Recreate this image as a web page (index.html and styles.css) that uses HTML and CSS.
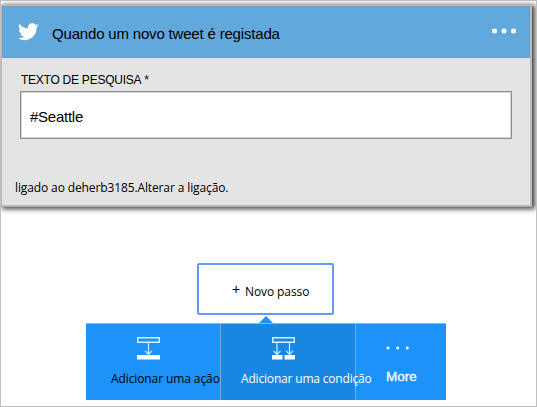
FILE: index.html
```html
<!DOCTYPE html>
<html lang="pt">
<head>
<meta charset="utf-8">
<title>Quando um novo tweet é registada</title>
<link rel="stylesheet" href="styles.css">
</head>
<body>
<main class="canvas">
  <section class="card">
    <header class="card-header">
      <svg class="bird" viewBox="0 0 24 24" fill="#fff"><path d="M23.6 4.9a9.7 9.7 0 0 1-2.8.8 4.9 4.9 0 0 0 2.1-2.7 9.7 9.7 0 0 1-3.1 1.2 4.8 4.8 0 0 0-8.3 4.4A13.8 13.8 0 0 1 1.6 3.5a4.9 4.9 0 0 0 1.5 6.5 4.8 4.8 0 0 1-2.2-.6 4.9 4.9 0 0 0 3.9 4.8 4.9 4.9 0 0 1-2.2.1 4.9 4.9 0 0 0 4.6 3.4A9.8 9.8 0 0 1 0 19.7a13.8 13.8 0 0 0 21.2-12.3 9.9 9.9 0 0 0 2.4-2.5z"/></svg>
      <h1 class="title">Quando um novo tweet é registada</h1>
      <svg class="dots" viewBox="0 0 24 6" fill="#fff"><circle cx="2.5" cy="3" r="2.5"/><circle cx="12" cy="3" r="2.5"/><circle cx="21.5" cy="3" r="2.5"/></svg>
    </header>
    <div class="card-body">
      <label class="label" for="search"><span class="label-text">TEXTO DE PESQUISA</span><span class="required">*</span></label>
      <div class="field" id="search">#Seattle</div>
      <p class="connection"><span>ligado ao deherb3185.</span><span>Alterar a ligação.</span></p>
    </div>
  </section>
  <div class="new-step"><span class="plus">+</span><span class="step-text">Novo passo</span></div>
  <svg class="pointer" viewBox="0 0 14 7"><path d="M0 7L7 0L14 7z" fill="#1b93f8"/></svg>
  <nav class="actions">
    <div class="action action-add">
      <svg class="icon" viewBox="0 0 23 23" fill="none" stroke="#d9efff"><path d="M.75.75h21.5v4.5H.75z" stroke-width="1.4"/><path d="M11.5 6v11M8 13.8l3.5 3.5 3.5-3.5" stroke-width="1.2"/><path d="M0 18h23v4.5H0z" fill="#fff" stroke="none"/></svg>
      <span class="action-text">Adicionar uma ação</span>
    </div>
    <div class="action action-condition">
      <svg class="icon" viewBox="0 0 23 23" fill="none" stroke="#d9efff"><path d="M.75.75h21.5v4.5H.75z" stroke-width="1.4"/><path d="M5 6v11M1.5 13.8L5 17.3l3.5-3.5M17.5 6v11M14 13.8l3.5 3.5 3.5-3.5" stroke-width="1.2"/><path d="M0 18h10.5v4.5H0zM12.5 18H23v4.5H12.5z" fill="#fff" stroke="none"/></svg>
      <span class="action-text">Adicionar uma condição</span>
    </div>
    <div class="action action-more">
      <svg class="more-dots" viewBox="0 0 24 4" fill="#fff"><circle cx="2" cy="2" r="1.5"/><circle cx="11.7" cy="2" r="1.5"/><circle cx="21.3" cy="2" r="1.5"/></svg>
      <span class="more-text">More</span>
    </div>
  </nav>
</main>
</body>
</html>
```

FILE: styles.css
```css
* { box-sizing: border-box; }
body { margin: 0; background: #fff; color: #000; font-family: "Liberation Sans", Arial, sans-serif; }
svg { display: block; flex: none; }
.canvas {
  width: 537px;
  height: 407px;
  border: 1px solid #bfbfbf;
  overflow: hidden;
  display: flex;
  flex-direction: column;
}
.card {
  flex: none;
  width: 531px;
  height: 202px;
  margin: 4px 0 0;
  border: 1px solid #bbb;
  border-right-width: 2px;
  border-bottom: 2px solid #b4b6b6;
  background: #e4e4e4;
  box-shadow: 2px 1px 5px 1px rgba(0, 0, 0, .75);
}
.card-header {
  height: 52px;
  border: 1px solid #6b9bbd;
  background: #61a8dd;
  display: flex;
  align-items: center;
  padding: 0 13px 0 15px;
}
.bird { width: 21px; height: 21px; margin-top: -1px; }
.title { margin: 4px 0 0 13px; font-size: 15px; line-height: 18px; font-weight: 400; letter-spacing: -.18px; white-space: nowrap; }
.dots { width: 24px; height: 6px; margin: -2px 0 0 auto; }
.card-body { padding: 15px 18px 0; }
.label { display: flex; height: 18px; line-height: 14px; font-size: 12px; padding-left: 1px; white-space: nowrap; }
.label-text { letter-spacing: -.25px; }
.required { margin-left: 3px; }
.field {
  width: 492px;
  height: 48px;
  border: 1px solid #8e8e8e;
  box-shadow: inset 0 0 0 1px #d5d5d5;
  background: #fff;
  padding: 3px 9px 0;
  font-size: 15px;
  line-height: 44px;
  letter-spacing: -.25px;
}
.connection { margin: 42px 0 0 -5px; font: 12px/14px "Open Sans", sans-serif; letter-spacing: -.12px; white-space: nowrap; }
.new-step {
  flex: none;
  width: 137px;
  height: 52px;
  margin: 56px 0 0 196px;
  border: 2px solid #639afa;
  border-radius: 2px;
  display: flex;
  align-items: center;
  padding: 5px 0 0 33px;
  font: 12px/16px "Open Sans", sans-serif;
  letter-spacing: -.1px;
  white-space: nowrap;
}
.plus { width: 13px; font: 14px/16px "Liberation Sans", sans-serif; margin-top: -5px; }
.pointer { width: 14px; height: 7px; margin: 1px 0 0 258px; }
.actions {
  flex: none;
  width: 360px;
  height: 77px;
  margin-left: 85px;
  border-top: 1px solid #7fbdf5;
  display: flex;
  background: #1b93f8;
}
.action { display: flex; flex-direction: column; white-space: nowrap; }
.action-add { width: 134px; }
.action-condition { width: 136px; background: #1986e2; border: solid #7da9e8; border-width: 0 1px; color: #fff; }
.action-more { width: 90px; color: #fff; }
.icon { width: 23px; height: 23px; margin: 13px 0 0 51px; }
.action-text { margin: 10px 0 0 25px; font: 12px/18px "Open Sans", sans-serif; letter-spacing: -.1px; position: relative; z-index: 1; }
.action-condition .action-text { margin-left: 20px; letter-spacing: -.18px; }
.more-dots { width: 24px; height: 4px; margin: 22px 0 0 30px; }
.more-text { margin: 18px 0 0 30px; font-size: 13.5px; line-height: 18px; -webkit-text-stroke: .3px #fff; }
```
